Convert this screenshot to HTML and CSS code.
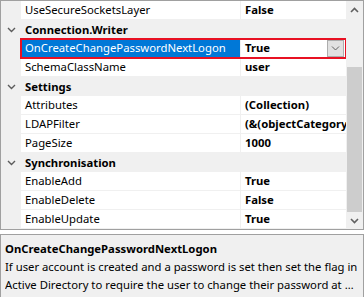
FILE: index.html
```html
<!DOCTYPE html>
<html lang="en">
<head>
    <meta charset="UTF-8">
    <title>Property Grid</title>
    <link rel="stylesheet" href="styles.css">
</head>
<body>
    <div class="grid">
        <div class="list">
            <div class="row">
                <div class="gutter"></div>
                <div class="cells">
                    <div class="name">UseSecureSocketsLayer</div>
                    <div class="value">False</div>
                </div>
            </div>
            <div class="row category">
                <div class="gutter"><svg width="9" height="6" viewBox="0 0 9 6"><path d="M1 1 L4.5 4.5 L8 1" fill="none" stroke="#5c5c5c" stroke-width="1.4"/></svg></div>
                <div class="cells">Connection.Writer</div>
            </div>
            <div class="row selected">
                <div class="gutter"></div>
                <div class="cells">
                    <div class="name">OnCreateChangePasswordNextLogon</div>
                    <div class="value">True
                        <span class="drop"><svg width="9" height="5" viewBox="0 0 9 5"><path d="M1 0.5 L4.5 4 L8 0.5" fill="none" stroke="#606060" stroke-width="1"/></svg></span>
                    </div>
                </div>
            </div>
            <div class="row">
                <div class="gutter"></div>
                <div class="cells">
                    <div class="name">SchemaClassName</div>
                    <div class="value">user</div>
                </div>
            </div>
            <div class="row category">
                <div class="gutter"><svg width="9" height="6" viewBox="0 0 9 6"><path d="M1 1 L4.5 4.5 L8 1" fill="none" stroke="#5c5c5c" stroke-width="1.4"/></svg></div>
                <div class="cells">Settings</div>
            </div>
            <div class="row">
                <div class="gutter"></div>
                <div class="cells">
                    <div class="name">Attributes</div>
                    <div class="value">(Collection)</div>
                </div>
            </div>
            <div class="row">
                <div class="gutter"></div>
                <div class="cells">
                    <div class="name">LDAPFilter</div>
                    <div class="value">(&amp;(objectCategory=person)</div>
                </div>
            </div>
            <div class="row">
                <div class="gutter"></div>
                <div class="cells">
                    <div class="name">PageSize</div>
                    <div class="value">1000</div>
                </div>
            </div>
            <div class="row category">
                <div class="gutter"><svg width="9" height="6" viewBox="0 0 9 6"><path d="M1 1 L4.5 4.5 L8 1" fill="none" stroke="#5c5c5c" stroke-width="1.4"/></svg></div>
                <div class="cells">Synchronisation</div>
            </div>
            <div class="row">
                <div class="gutter"></div>
                <div class="cells">
                    <div class="name">EnableAdd</div>
                    <div class="value">True</div>
                </div>
            </div>
            <div class="row">
                <div class="gutter"></div>
                <div class="cells">
                    <div class="name">EnableDelete</div>
                    <div class="value">False</div>
                </div>
            </div>
            <div class="row">
                <div class="gutter"></div>
                <div class="cells">
                    <div class="name">EnableUpdate</div>
                    <div class="value">True</div>
                </div>
            </div>
        </div>
        <div class="scrollbar">
            <div class="arrow"><svg width="9" height="6" viewBox="0 0 9 6"><path d="M1 5 L4.5 1.5 L8 5" fill="none" stroke="#606060" stroke-width="1.6"/></svg></div>
            <div class="track">
                <div class="thumb"></div>
            </div>
            <div class="arrow"><svg width="9" height="6" viewBox="0 0 9 6"><path d="M1 1 L4.5 4.5 L8 1" fill="none" stroke="#606060" stroke-width="1.6"/></svg></div>
        </div>
    </div>

    <div class="help">
        <div class="help-title">OnCreateChangePasswordNextLogon</div>
        <div class="help-line">If user account is created and a password is set then set the flag in</div>
        <div class="help-line last">Active Directory to require the user to change their password at next logon.</div>
    </div>
</body>
</html>
```

FILE: styles.css
```css
body {
    margin: 0;
    width: 364px;
    height: 297px;
    background: #fff;
    font-family: "Segoe UI", "Noto Sans", sans-serif;
    font-size: 11.3px;
    color: #000;
    overflow: hidden;
}
.grid {
    display: flex;
    width: 362px;
    height: 228px;
    border: 1px solid #a0a0a0;
    background: #fff;
}
.list {
    flex: 1;
    overflow: hidden;
}
.row {
    display: flex;
    height: 19px;
}
.gutter {
    width: 20px;
    flex: none;
    background: #f0f0f0;
    display: flex;
    align-items: center;
    justify-content: center;
}
.cells {
    flex: 1;
    display: flex;
    min-width: 0;
}
.name {
    width: 215px;
    flex: none;
    padding-left: 4px;
    line-height: 18px;
    border-bottom: 1px solid #f0f0f0;
    border-right: 1px solid #f0f0f0;
    white-space: nowrap;
    overflow: hidden;
}
.value {
    flex: 1;
    min-width: 0;
    padding-left: 4px;
    line-height: 18px;
    font-weight: bold;
    border-bottom: 1px solid #f0f0f0;
    white-space: nowrap;
    overflow: hidden;
    display: flex;
    align-items: center;
}
.category .cells {
    background: #f0f0f0;
    font-weight: bold;
    padding-left: 4px;
    line-height: 19px;
}
.selected .cells {
    outline: 2px solid #e81123;
    outline-offset: -1px;
    position: relative;
}
.selected .name {
    background: #0078d7;
    color: #fff;
    border-bottom-color: #0078d7;
}
.selected .value {
    justify-content: space-between;
    padding-right: 2px;
}
.drop {
    width: 15px;
    height: 15px;
    background: #e1e1e1;
    border: 1px solid #adadad;
    display: flex;
    align-items: center;
    justify-content: center;
}
.scrollbar {
    width: 17px;
    flex: none;
    background: #f0f0f0;
    display: flex;
    flex-direction: column;
}
.arrow {
    height: 17px;
    display: flex;
    align-items: center;
    justify-content: center;
}
.track {
    flex: 1;
    padding-top: 49px;
}
.thumb {
    margin: 0 1px;
    height: 145px;
    background: #cdcdcd;
}
.help {
    margin-top: 4px;
    height: 58px;
    border: 1px solid #a0a0a0;
    background: #f0f0f0;
    padding: 5px 4px 0 4px;
    line-height: 18px;
}
.help-title {
    font-weight: bold;
}
.help-line {
    white-space: nowrap;
    overflow: hidden;
    text-overflow: ellipsis;
}
```
